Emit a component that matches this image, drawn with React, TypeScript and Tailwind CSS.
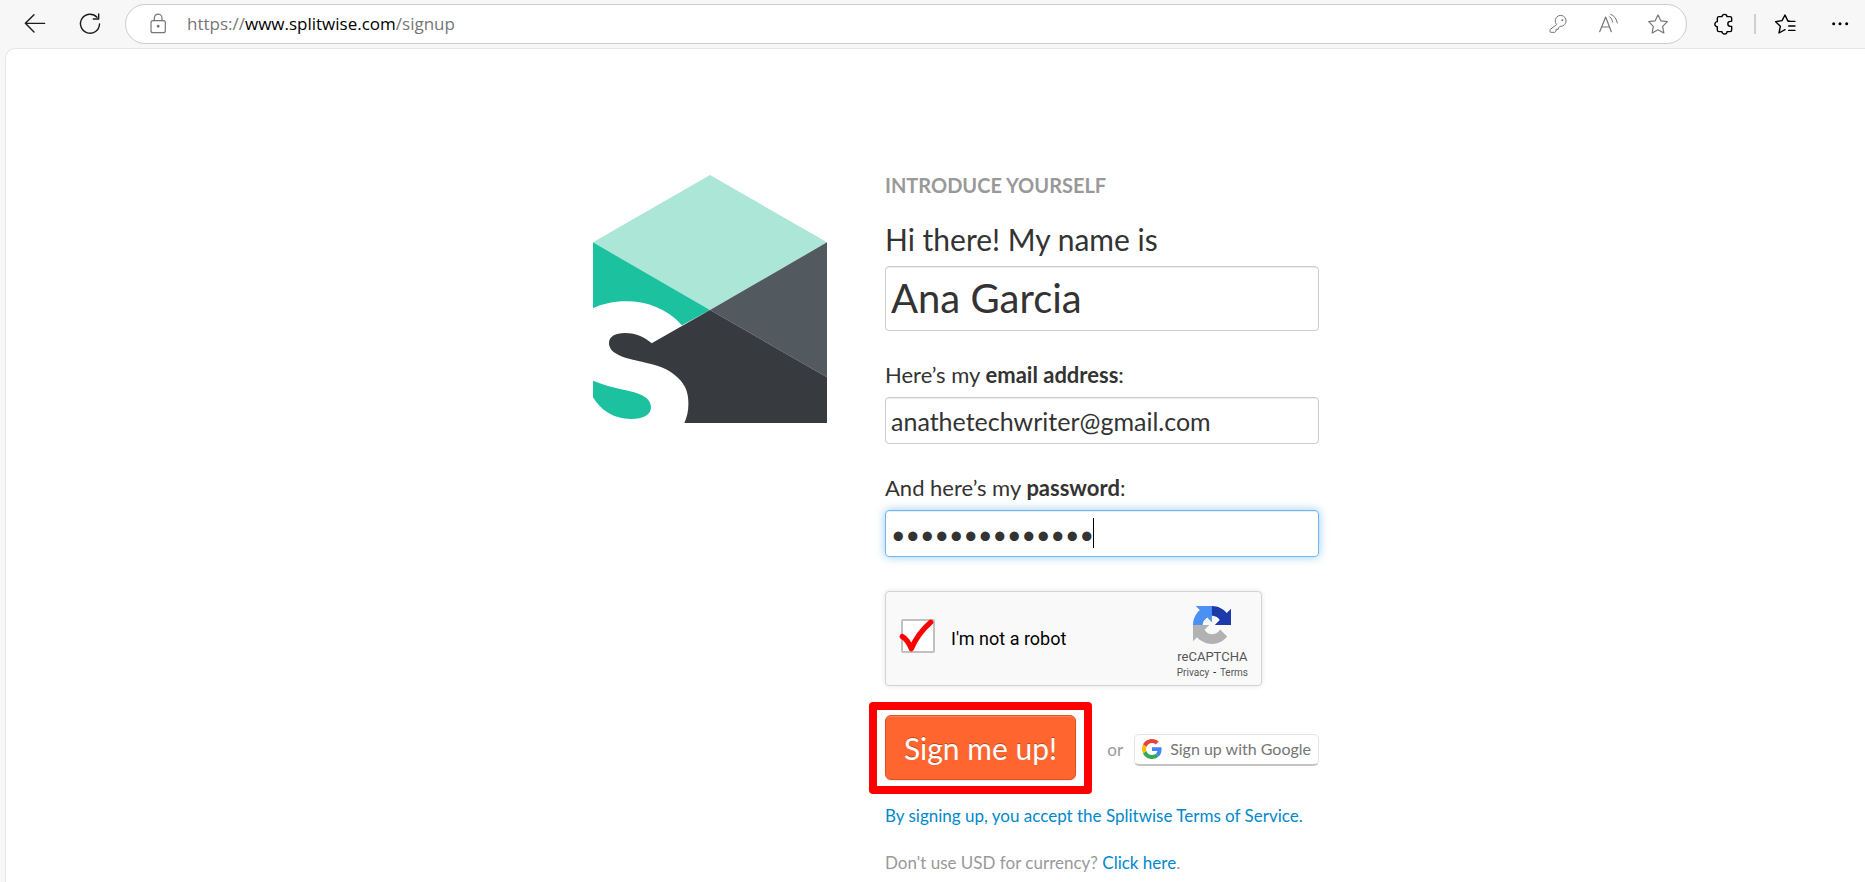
import { ReactNode } from "react";

function Icon({ children }: { children: ReactNode }) {
  return (
    <svg
      viewBox="0 0 72 72"
      className="size-6"
      fill="none"
      stroke="currentColor"
      strokeWidth="3.6"
      strokeLinecap="round"
      strokeLinejoin="round"
      aria-hidden="true"
    >
      {children}
    </svg>
  );
}

function ToolButton({ label, children }: { label: string; children: ReactNode }) {
  return (
    <button type="button" aria-label={label} className="flex size-6 items-center justify-center">
      {children}
    </button>
  );
}

function Toolbar() {
  return (
    <header className="flex h-12 shrink-0 items-center pr-[13px] pl-[23px] text-[#1b1b1b]">
      <div className="flex items-center gap-[31px]">
        <ToolButton label="Back">
          <Icon>
            <path strokeWidth="4.2" d="M65 34H7M33 8L7 34l26 26" />
          </Icon>
        </ToolButton>
        <ToolButton label="Refresh">
          <Icon>
            <path strokeWidth="4.2" d="M57 16A28.500 28.500 0 1 0 64.500 36M62 6V21H46" />
          </Icon>
        </ToolButton>
      </div>
      <div className="ml-[23px] flex h-10 grow items-center rounded-full border border-[#cdcdcd] bg-white pr-4 pl-5 text-[#767676]">
        <ToolButton label="Site information">
          <Icon>
            <rect x="15" y="26" width="43" height="36" rx="6" />
            <path d="M25 26V18a11.500 11.500 0 0 1 23 0v8" />
            <circle cx="36.500" cy="43" r="2.600" fill="currentColor" />
          </Icon>
        </ToolButton>
        <div className="grow pl-[17px] font-['Open_Sans',sans-serif] text-[17px] leading-6">
          https://<span className="text-black">www.splitwise.com</span>/signup
        </div>
        <div className="flex items-center gap-[26px]">
          <ToolButton label="Saved passwords">
            <Icon>
              <g strokeWidth="3">
                <path d="M31 37A16.500 16.500 0 1 1 42 43L37 48V52H30V58L26 61H14Q12 61 12 58V54Z" />
                <circle cx="48.500" cy="24.500" r="1.500" fill="currentColor" />
              </g>
            </Icon>
          </ToolButton>
          <ToolButton label="Read aloud">
            <Icon>
              <path d="M11 59L29 15L46 59M17 45H41" />
              <path d="M41 14Q48 19 50 30M44 7Q60 12 64 33" strokeWidth="3" />
            </Icon>
          </ToolButton>
          <ToolButton label="Add to favorites">
            <Icon>
              <path d="M36 9L44.500 26.500L64 29L50 43L53.500 63L36 53.500L18.500 63L22 43L8 29L27.500 26.500Z" />
            </Icon>
          </ToolButton>
        </div>
      </div>
      <div className="flex items-center text-black">
        <div className="ml-[25px] flex items-center">
          <ToolButton label="Extensions">
            <Icon>
              <path
                strokeWidth="4.200"
                d="M20 14H30A7.500 7 0 0 1 45 14H54Q59 14 59 19V28H55A7.500 7.500 0 0 0 55 43H59V54Q59 59 54 59H45A7.500 7 0 0 1 30 59H21Q16 59 16 54V44A7.500 7.500 0 0 1 16 29V19Q16 14 21 14Z"
              />
            </Icon>
          </ToolButton>
        </div>
        <div className="ml-[18px] h-5 w-0.5 bg-[#cfcfcf]" />
        <div className="ml-[17px] flex items-center gap-[31px]">
          <ToolButton label="Favorites">
            <Icon>
              <path
                strokeWidth="4.200"
                d="M53 28L44 26L36 9L27 26L8 29L22 43L18 63L36 53M45 28H66M47 42H66M47 55H66"
              />
            </Icon>
          </ToolButton>
          <ToolButton label="Settings and more">
            <Icon>
              <g fill="currentColor" stroke="none">
                <circle cx="17" cy="35" r="4.500" />
                <circle cx="36" cy="35" r="4.500" />
                <circle cx="56" cy="35" r="4.500" />
              </g>
            </Icon>
          </ToolButton>
        </div>
      </div>
    </header>
  );
}

function SplitwiseLogo() {
  return (
    <svg viewBox="39 45 702 744" className="w-[234px] shrink-0" role="img" aria-label="Splitwise">
      <path fill="#ace6d7" d="M390 45L741 247L390 450L39 247Z" />
      <path fill="#1cc29f" d="M39 247L390 450L306 496C260 445 200 424 138 424C100 424 65 432 39 445Z" />
      <path fill="#52595f" d="M741 247L390 450L741 652Z" />
      <path
        fill="#373a3f"
        d="M390 450L741 652V789H313C322 770 326 750 325 725C325 700 317 680 303 663C280 635 245 618 200 609C160 600 130 595 107 580C92 570 87 560 87 548C88 530 105 519 135 519C170 519 195 533 215 550Z"
      />
      <path
        fill="#1cc29f"
        d="M39 662C65 672 95 682 130 689C170 697 213 708 213 742C213 765 190 777 152 777C100 777 62 750 39 712Z"
      />
    </svg>
  );
}

function RecaptchaLogo() {
  return (
    <svg viewBox="0 0 64 64" className="size-[38px]" aria-hidden="true">
      <path
        fill="#1c3aa9"
        d="M64 31.955l-.033-1.370V4.687l-7.160 7.160C50.948 4.674 42.033.093 32.050.093c-10.400 0-19.622 4.960-25.458 12.640l11.736 11.860a15.550 15.550 0 0 1 4.754-5.334c2.050-1.600 4.952-2.906 8.968-2.906.485 0 .860.057 1.135.163 4.976.393 9.288 3.140 11.828 7.124l-8.307 8.307L64 31.953"
      />
      <path
        fill="#4a90f5"
        d="M31.862.094l-1.370.033H4.594l7.160 7.160C4.580 13.147 0 22.060 0 32.046c0 10.400 4.960 19.622 12.640 25.458L24.500 45.768a15.550 15.550 0 0 1-5.334-4.754c-1.600-2.050-2.906-4.952-2.906-8.968 0-.485.057-.860.163-1.135.393-4.976 3.140-9.288 7.124-11.828l8.307 8.307L31.860.095"
      />
      <path
        fill="#b2b2b2"
        d="M.001 32.045l.033 1.370v25.898l7.160-7.160c5.860 7.173 14.774 11.754 24.760 11.754 10.400 0 19.622-4.960 25.458-12.640l-11.736-11.860a15.550 15.550 0 0 1-4.754 5.334c-2.050 1.600-4.952 2.906-8.968 2.906-.485 0-.860-.057-1.135-.163-4.976-.393-9.288-3.140-11.828-7.124l8.307-8.307c-10.522.040-22.400.066-27.295-.005"
      />
    </svg>
  );
}

function Recaptcha() {
  return (
    <div className="mt-[34px] flex h-[95px] w-[377px] items-center justify-between rounded-[4px] border border-[#d3d3d3] bg-[#f9f9f9] pr-[13px] pl-[15px] font-[Roboto,sans-serif] shadow-[0_0_4px_1px_rgba(0,0,0,0.08)]">
      <div className="flex items-center pb-1.5">
        <div className="relative size-[34px]">
          <input
            id="robot"
            type="checkbox"
            defaultChecked
            className="block size-[34px] appearance-none rounded-[2px] border-2 border-[#c1c1c1] bg-white"
          />
          <svg
            viewBox="93 117 102 102"
            className="pointer-events-none absolute inset-0 overflow-visible"
            fill="none"
            stroke="#ff0000"
            strokeWidth="16"
            strokeLinecap="round"
            strokeLinejoin="round"
            aria-hidden="true"
          >
            <path d="M97 170Q113 179 124 206Q144 160 182 127" />
          </svg>
        </div>
        <label htmlFor="robot" className="pt-1.5 pl-4 text-[18px] leading-6 text-black">
          I'm not a robot
        </label>
      </div>
      <div className="flex flex-col items-center pt-2 text-[#555]">
        <RecaptchaLogo />
        <span className="pt-1 text-[13px] leading-[18px]">reCAPTCHA</span>
        <span className="text-[10px] leading-[14px]">
          <a href="#privacy">Privacy</a>
          <span className="px-1 text-black">-</span>
          <a href="#terms">Terms</a>
        </span>
      </div>
    </div>
  );
}

function GoogleIcon() {
  return (
    <svg viewBox="0 0 48 48" className="size-5" aria-hidden="true">
      <path
        fill="#ea4335"
        d="M24 9.500c3.540 0 6.710 1.220 9.210 3.600l6.850-6.850C35.900 2.380 30.470 0 24 0 14.620 0 6.510 5.380 2.560 13.220l7.980 6.190C12.430 13.720 17.740 9.500 24 9.500z"
      />
      <path
        fill="#4285f4"
        d="M46.980 24.550c0-1.570-.150-3.090-.380-4.550H24v9.020h12.940c-.580 2.960-2.260 5.480-4.780 7.180l7.730 6c4.510-4.180 7.090-10.360 7.090-17.650z"
      />
      <path
        fill="#fbbc05"
        d="M10.530 28.590c-.480-1.450-.760-2.990-.760-4.590s.270-3.140.760-4.590l-7.980-6.190C.920 16.460 0 20.120 0 24c0 3.880.920 7.540 2.560 10.780l7.970-6.190z"
      />
      <path
        fill="#34a853"
        d="M24 48c6.480 0 11.930-2.130 15.890-5.810l-7.730-6c-2.150 1.450-4.920 2.300-8.160 2.300-6.260 0-11.570-4.220-13.470-9.910l-7.980 6.190C6.510 42.620 14.620 48 24 48z"
      />
    </svg>
  );
}

function SignupForm() {
  return (
    <form className="-mt-0.5 w-[434px]" onSubmit={(e) => e.preventDefault()}>
      <h1 className="text-[20px] leading-6 font-bold text-[#999]">INTRODUCE YOURSELF</h1>

      <label htmlFor="name" className="mt-[22px] block text-[30px] leading-10">
        Hi there! My name is
      </label>
      <input
        id="name"
        type="text"
        defaultValue="Ana Garcia"
        className="mt-[7px] block h-[65px] w-full rounded-[4px] border border-[#ccc] px-[5px] pb-0.5 text-[40px] shadow-[inset_0_1px_1px_rgba(0,0,0,0.075)]"
      />

      <label htmlFor="email" className="mt-[30px] block text-[22px] leading-7">
        Here’s my <strong>email address</strong>:
      </label>
      <input
        id="email"
        type="email"
        defaultValue="anathetechwriter@gmail.com"
        className="mt-2 block h-[47px] w-full rounded-[4px] border border-[#ccc] px-[5px] text-[25px] shadow-[inset_0_1px_1px_rgba(0,0,0,0.075)]"
      />

      <label htmlFor="password" className="mt-[30px] block text-[22px] leading-7">
        And here’s my <strong>password</strong>:
      </label>
      <div className="relative mt-2">
        <input
          id="password"
          type="password"
          defaultValue="anatechwriter1"
          className="block h-[47px] w-full rounded-[4px] border border-[#6fb7f2] px-[5px] text-[25px] caret-transparent shadow-[inset_0_1px_1px_rgba(0,0,0,0.075),0_0_10px_rgba(82,168,236,0.6)] outline-none"
        />
        <span className="absolute top-2 left-52 h-[30px] w-px bg-black" />
      </div>

      <Recaptcha />

      <div className="mt-[29px] flex items-center justify-between">
        <div className="relative">
          <button
            type="submit"
            className="block h-[65px] w-[191px] rounded-[6px] border border-[#e0501f] bg-[#ff652f] text-[30px] leading-10 text-white shadow-[inset_0_1px_0_rgba(255,255,255,0.2),0_1px_2px_rgba(0,0,0,0.1)] [text-shadow:0_-1px_0_rgba(0,0,0,0.3)]"
          >
            Sign me up!
          </button>
          <span className="pointer-events-none absolute -inset-x-4 -top-[13px] -bottom-[14px] rounded-[4px] border-8 border-[#ff0000]" />
        </div>
        <div className="flex items-center gap-[11px]">
          <span className="pt-1 text-[17px] leading-6 text-[#999]">or</span>
          <button
            type="button"
            className="mt-1 flex h-8 items-center gap-2 rounded-[5px] border border-b-2 border-[#e5e5e5] border-b-[#c4c4c4] bg-white px-[7px] text-[16px] leading-6 text-[#757575]"
          >
            <GoogleIcon />
            Sign up with Google
          </button>
        </div>
      </div>

      <p className="mt-6 text-[17px] leading-6">
        <a href="#terms-of-service" className="text-[#0088cc]">
          By signing up, you accept the Splitwise Terms of Service.
        </a>
      </p>
      <p className="mt-[23px] text-[17px] leading-6 text-[#999]">
        Don't use USD for currency?{" "}
        <a href="#currency" className="text-[#0088cc]">
          Click here
        </a>
        .
      </p>
    </form>
  );
}

export default function App() {
  return (
    <div className="flex min-h-screen flex-col bg-[#f7f7f7]">
      <Toolbar />
      <main className="ml-[5px] flex grow items-start justify-center gap-[58px] rounded-tl-[10px] border-t border-l border-[#e6e6e6] bg-white pt-[126px] pl-[41px] font-[Lato,sans-serif] text-[#333]">
        <SplitwiseLogo />
        <SignupForm />
      </main>
    </div>
  );
}
